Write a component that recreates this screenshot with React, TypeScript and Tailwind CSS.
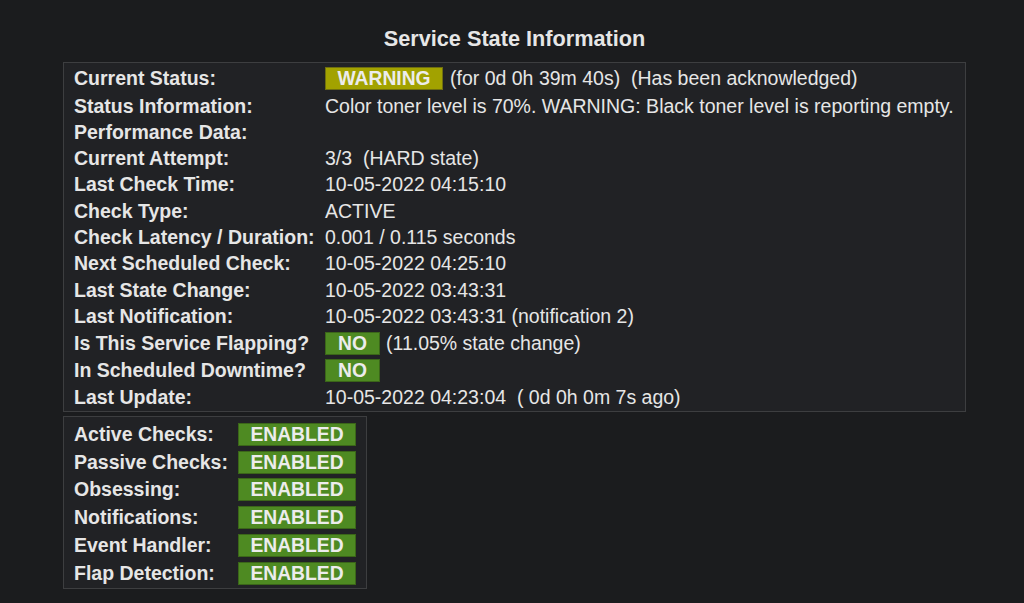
import React from "react";

type Row = {
  label: string;
  value: React.ReactNode;
  h: string;
};

function Badge({
  text,
  kind,
  width,
}: {
  text: string;
  kind: "warn" | "ok";
  width: string;
}) {
  const color =
    kind === "warn"
      ? "bg-[#a2a200] border-[#6f6f0e]"
      : "bg-[#4e8a22] border-[#3b6619]";
  return (
    <span
      className={`inline-flex h-[23px] items-center justify-center border font-bold text-[19.3px] leading-none text-[#ececec] ${color} ${width}`}
    >
      {text}
    </span>
  );
}

const stateRows: Row[] = [
  {
    label: "Current Status:",
    h: "h-[29px]",
    value: (
      <span className="flex items-center">
        <Badge text="WARNING" kind="warn" width="w-[118px]" />
        <span className="ml-[7px] whitespace-pre">
          (for 0d 0h 39m 40s)  (Has been acknowledged)
        </span>
      </span>
    ),
  },
  {
    label: "Status Information:",
    h: "h-[26.3px]",
    value:
      "Color toner level is 70%. WARNING: Black toner level is reporting empty.",
  },
  { label: "Performance Data:", h: "h-[26.3px]", value: "" },
  {
    label: "Current Attempt:",
    h: "h-[26.3px]",
    value: <span className="whitespace-pre">3/3  (HARD state)</span>,
  },
  { label: "Last Check Time:", h: "h-[26.3px]", value: "10-05-2022 04:15:10" },
  { label: "Check Type:", h: "h-[26.3px]", value: "ACTIVE" },
  {
    label: "Check Latency / Duration:",
    h: "h-[26.3px]",
    value: "0.001 / 0.115 seconds",
  },
  {
    label: "Next Scheduled Check:",
    h: "h-[26.3px]",
    value: "10-05-2022 04:25:10",
  },
  { label: "Last State Change:", h: "h-[26.3px]", value: "10-05-2022 03:43:31" },
  {
    label: "Last Notification:",
    h: "h-[26.3px]",
    value: "10-05-2022 03:43:31 (notification 2)",
  },
  {
    label: "Is This Service Flapping?",
    h: "h-[27px]",
    value: (
      <span className="flex items-center">
        <Badge text="NO" kind="ok" width="w-[55px]" />
        <span className="ml-[6px]">(11.05% state change)</span>
      </span>
    ),
  },
  {
    label: "In Scheduled Downtime?",
    h: "h-[27.5px]",
    value: <Badge text="NO" kind="ok" width="w-[55px]" />,
  },
  {
    label: "Last Update:",
    h: "h-[26.3px]",
    value: (
      <span className="whitespace-pre">
        10-05-2022 04:23:04  ( 0d 0h 0m 7s ago)
      </span>
    ),
  },
];

const flags = [
  "Active Checks:",
  "Passive Checks:",
  "Obsessing:",
  "Notifications:",
  "Event Handler:",
  "Flap Detection:",
];

export default function App() {
  return (
    <div
      className="min-h-[603px] w-full bg-[#1b1c1e] text-[#e6e6e6]"
      style={{ fontFamily: '"Liberation Sans", Arial, sans-serif' }}
    >
      <div className="ml-[63px] w-[903px] pt-[25px]">
        <div className="mb-[10px] text-center text-[21.7px] font-bold leading-[27px]">
          Service State Information
        </div>

        {/* state table */}
        <div className="border border-[#3d3e40] bg-[#212225] pl-[10px] pr-[8px] pt-[1px] pb-[1px] text-[19.5px]">
          {stateRows.map((r) => (
            <div key={r.label} className={`flex items-center ${r.h}`}>
              <div className="w-[251px] shrink-0 font-bold">{r.label}</div>
              <div className="whitespace-nowrap">{r.value}</div>
            </div>
          ))}
        </div>

        {/* flags table */}
        <div className="mt-[4px] w-[304px] border border-[#3d3e40] bg-[#212225] pl-[10px] pt-[3px] pb-[1px] text-[19.5px]">
          {flags.map((f) => (
            <div key={f} className="flex h-[27.8px] items-center">
              <div className="w-[164px] shrink-0 font-bold">{f}</div>
              <Badge text="ENABLED" kind="ok" width="w-[118px]" />
            </div>
          ))}
        </div>
      </div>
    </div>
  );
}
